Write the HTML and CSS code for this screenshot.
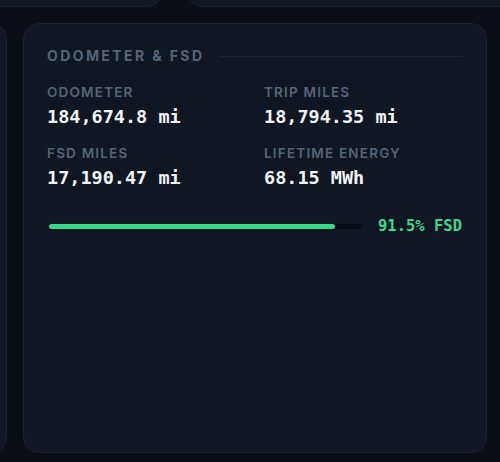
FILE: index.html
```html
<!DOCTYPE html>
<html lang="en">
<head>
    <meta charset="UTF-8">
    <meta name="viewport" content="width=device-width, initial-scale=1.0">
    <title>Vehicle Dashboard</title>
    <link rel="stylesheet" href="styles.css">
</head>
<body>
    <div id="frame">
        <div id="dash">
            <div class="top-row">
                <div class="card stub-left"></div>
                <div class="card stub-right"></div>
            </div>
            <div class="main-row">
                <div class="card side"></div>
                <div class="card fsd">
                    <div class="card-title">
                        <span>ODOMETER &amp; FSD</span>
                        <div class="rule"></div>
                    </div>
                    <div class="stats">
                        <div class="stat">
                            <div class="label">ODOMETER</div>
                            <div class="value">184,674.8 mi</div>
                        </div>
                        <div class="stat">
                            <div class="label">TRIP MILES</div>
                            <div class="value">18,794.35 mi</div>
                        </div>
                        <div class="stat">
                            <div class="label">FSD MILES</div>
                            <div class="value">17,190.47 mi</div>
                        </div>
                        <div class="stat">
                            <div class="label">LIFETIME ENERGY</div>
                            <div class="value">68.15 MWh</div>
                        </div>
                    </div>
                    <div class="fsd-share">
                        <div class="track"><div class="fill" style="width: 91.5%"></div></div>
                        <span class="pct">91.5% FSD</span>
                    </div>
                </div>
            </div>
        </div>
    </div>
</body>
</html>
```

FILE: styles.css
```css
body {
    margin: 0;
    background-color: #0b0e14;
    font-family: 'Inter', 'Noto Sans', sans-serif;
}

#frame {
    width: 500px;
    height: 462px;
    overflow: hidden;
}

#dash {
    width: 720px;
    margin: -40px 0 0 -100px;
}

.card {
    background-color: #111722;
    border: 1px solid #1b2130;
    border-radius: 16px;
    box-sizing: border-box;
}

.top-row {
    display: flex;
    gap: 24px;
    height: 47px;
}

.stub-left {
    width: 263px;
}

.stub-right {
    flex: 1;
}

.main-row {
    display: flex;
    gap: 16px;
    margin-top: 16px;
}

.side {
    width: 107px;
    height: 430px;
}

.fsd {
    width: 464px;
    height: 430px;
    padding: 24px 23px;
}

.card-title {
    display: flex;
    align-items: center;
    gap: 16px;
    color: #586376;
    font-size: 14px;
    font-weight: 700;
    letter-spacing: 2.4px;
    line-height: 16px;
}

.rule {
    flex: 1;
    height: 1px;
    background-color: #1c2331;
}

.stats {
    display: grid;
    grid-template-columns: 1fr 1fr;
    column-gap: 18px;
    row-gap: 16px;
    margin-top: 20px;
}

.label {
    color: #586376;
    font-size: 13.5px;
    font-weight: 600;
    letter-spacing: 1.2px;
    line-height: 16px;
}

.value {
    color: #f1f4f8;
    font-family: 'DejaVu Sans Mono', 'Liberation Mono', monospace;
    font-size: 18.5px;
    font-weight: 700;
    line-height: 24px;
    margin-top: 5px;
}

.fsd-share {
    display: flex;
    align-items: center;
    gap: 16px;
    margin-top: 27px;
    padding-left: 2px;
}

.track {
    flex: 1;
    height: 5px;
    border-radius: 3px;
    background-color: #0a0d13;
}

.fill {
    height: 100%;
    border-radius: 3px;
    background-color: #3ad98a;
}

.pct {
    color: #3ad98a;
    font-family: 'DejaVu Sans Mono', 'Liberation Mono', monospace;
    font-size: 15.5px;
    font-weight: 700;
    margin-right: 1px;
}
```
